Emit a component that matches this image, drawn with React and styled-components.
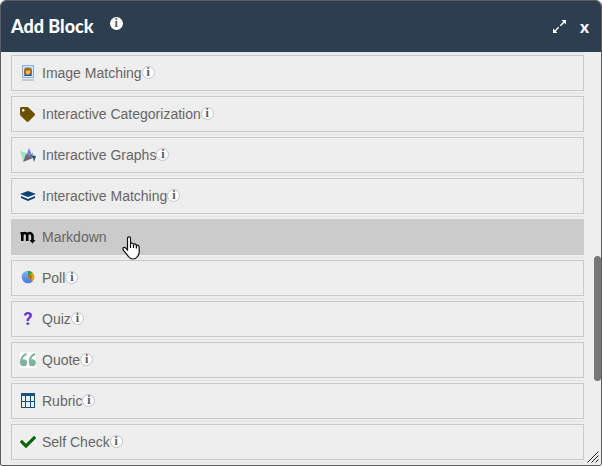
import React from 'react';
import styled, { createGlobalStyle } from 'styled-components';
import { FaTag, FaCheck } from 'react-icons/fa';

const GlobalStyle = createGlobalStyle`
  * {
    box-sizing: border-box;
  }
  body {
    margin: 0;
    background: #fff;
    font-family: 'Liberation Sans', Arial, sans-serif;
  }
`;

function ImageIcon() {
  return (
    <svg width='16' height='16' viewBox='0 0 16 16' aria-hidden='true'>
      <rect x='2.5' y='.5' width='11' height='12' fill='#d9e8fa' stroke='#88abe2' />
      <rect x='4' y='2' width='8' height='9' fill='#a9cdf4' />
      <path d='M4 9V6q0-3.500 4-3.500t4 3.500v3l-2 1z' fill='#a86a13' />
      <path d='M6 6l4-1v3l-2 2-2-1z' fill='#f5b75c' />
      <path d='M4 11q0-2 2-2l2 1 2-1q2 0 2 2z' fill='#245b9e' />
      <path d='M2 14h12v2H2z' fill='#c8c8c8' />
    </svg>
  );
}

function GraphsIcon() {
  return (
    <svg width='16' height='16' viewBox='0 0 16 16' aria-hidden='true'>
      <path d='M0 4l7 2-4 8z' fill='#98e8bd' />
      <path d='M9 1l4 9-7-1z' fill='#7b83dc' />
      <path d='M6 7l7 4-10 4z' fill='#71657e' />
      <path d='M10 8l6 1-2 6-1-4z' fill='#245468' />
      <path d='M12 5l2 4h-2z' fill='#7aa5c6' />
    </svg>
  );
}

function LayersIcon() {
  return (
    <svg width='16' height='16' viewBox='0 0 16 16' aria-hidden='true'>
      <path d='M0 6L8 3l8 3-8 3z' fill='#0b4273' />
      <path d='M1 8v2L8 13l7-3V8L8 11z' fill='#0b4273' />
    </svg>
  );
}

function MarkdownIcon() {
  return (
    <svg width='16' height='16' viewBox='0 0 16 16' fill='none' stroke='#000' aria-hidden='true'>
      <path d='M.5 4.200H2.300V12M2.300 6Q3 4 4.800 4T7.200 6V12M7.200 6Q8 4 9.700 4T12.500 6.500V11' strokeWidth='2.600' />
      <path d='M9.500 11h6l-3 3.500z' fill='#000' stroke='none' />
    </svg>
  );
}

function PollIcon() {
  return (
    <svg width='16' height='16' viewBox='0 0 16 16' aria-hidden='true'>
      <defs>
        <linearGradient id='pollBlue' x1='0' y1='0' x2='0' y2='1'>
          <stop offset='0' stopColor='#83b4f4' />
          <stop offset='1' stopColor='#4379df' />
        </linearGradient>
      </defs>
      <circle cx='8' cy='7' r='6.300' fill='url(#pollBlue)' />
      <path d='M8 7V.7a6.300 6.300 0 0 1 4.200 1.600z' fill='#22a84a' />
      <path d='M8 7l4.200-4.700A6.300 6.300 0 0 1 12.500 11.400z' fill='#e6a211' />
      <path d='M8 7l3.500-3v6.500z' fill='#c3571c' />
    </svg>
  );
}

function QuoteIcon() {
  return (
    <svg width='16' height='16' viewBox='0 0 16 16' aria-hidden='true'>
      <path d='M0 0h16v16H0z' fill='#fff' />
      <g fill='#7fb39e'>
        <circle cx='3.600' cy='10.700' r='3.500' />
        <circle cx='12.300' cy='10.700' r='3.500' />
      </g>
      <path d='M1.200 10.500Q.8 4 6.500 2M9.900 10.500Q9.500 4 15.200 2' fill='none' stroke='#7fb39e' strokeWidth='2' />
    </svg>
  );
}

function RubricIcon() {
  return (
    <svg width='16' height='16' viewBox='0 0 16 16' aria-hidden='true'>
      <path d='M1 0h14v15H1z' fill='#14527d' />
      <path d='M2 3h3v5H2zM6 3h4v5H6zM11 3h3v5h-3zM2 9h3v5H2zM6 9h4v5H6zM11 9h3v5h-3z' fill='#eee' />
    </svg>
  );
}

function ExpandIcon() {
  return (
    <svg width='13' height='13' viewBox='0 0 13 13' fill='#fff' aria-hidden='true'>
      <path d='M8.500 0H13v4.500z M4.500 13H0V8.500z' />
      <path d='M7.300 5.700L11.500 1.500M5.700 7.300L1.500 11.500' stroke='#fff' strokeWidth='1.500' />
    </svg>
  );
}

function QuestionMark() {
  return <Question aria-hidden='true'>?</Question>;
}

const blocks = [
  { name: 'Image Matching', icon: <ImageIcon />, info: true },
  { name: 'Interactive Categorization', icon: <FaTag size={15} color='#6b5000' />, info: true },
  { name: 'Interactive Graphs', icon: <GraphsIcon />, info: true },
  { name: 'Interactive Matching', icon: <LayersIcon />, info: true },
  { name: 'Markdown', icon: <MarkdownIcon />, info: false },
  { name: 'Poll', icon: <PollIcon />, info: true },
  { name: 'Quiz', icon: <QuestionMark />, info: true },
  { name: 'Quote', icon: <QuoteIcon />, info: true },
  { name: 'Rubric', icon: <RubricIcon />, info: true },
  { name: 'Self Check', icon: <FaCheck size={16} color='#066606' />, info: true },
];

function HandCursor() {
  return (
    <Cursor viewBox='0 0 18 24' aria-hidden='true'>
      <path d='M5.500 14V2.500Q5.500.8 7 .8T8.500 2.500V8Q8.700 6.800 10 7t1.500 1.600Q11.800 7.600 13 7.900t1.400 1.600Q15 8.800 16 9.200t1.200 1.600V16Q17 19 15.500 20.500Q14 23 11 23T6.500 20.500L1.200 14Q.5 12.300 1.500 11.600T4 12.300z' />
      <path d='M8.500 8v4M11.500 8.500V12M14.400 9.500v3' />
    </Cursor>
  );
}

function App() {
  const [active, setActive] = React.useState('Markdown');
  return (
    <>
      <GlobalStyle />
      <Dialog role='dialog' aria-labelledby='dialog-title'>
        <Header>
          <Title id='dialog-title'>Add Block</Title>
          <InfoButton $header aria-label='About blocks'>
            i
          </InfoButton>
          <HeaderActions>
            <HeaderButton aria-label='Expand'>
              <ExpandIcon />
            </HeaderButton>
            <HeaderButton aria-label='Close'>x</HeaderButton>
          </HeaderActions>
        </Header>
        <BlockList>
          {blocks.map((block) => (
            <BlockItem key={block.name}>
              <BlockRow $active={block.name === active}>
                <BlockButton onClick={() => setActive(block.name)}>
                  <IconSlot>{block.icon}</IconSlot>
                  {block.name}
                </BlockButton>
                {block.info && (
                  <InfoButton aria-label={`About ${block.name}`}>i</InfoButton>
                )}
                {block.name === active && <HandCursor />}
              </BlockRow>
            </BlockItem>
          ))}
        </BlockList>
        <ScrollThumb />
        <ResizeGrip viewBox='0 0 12 12' aria-hidden='true'>
          <path d='M.5 11.500l11-11M4.500 11.500l7-7M8.500 11.500l3-3' />
        </ResizeGrip>
      </Dialog>
    </>
  );
}

const Dialog = styled.div`
  position: relative;
  min-height: 100vh;
  border: 1px solid #5c5c5c;
  border-radius: 6px 6px 2px 2px;
  background: #eee;
  overflow: hidden;
`;

const Header = styled.header`
  display: flex;
  align-items: center;
  height: 51px;
  padding: 0 12px 0 10px;
  background: #2d3e50;
  color: #fff;
`;

const Title = styled.h1`
  margin: 0 16px 2px 0;
  font: 900 18px/24px Lato, sans-serif;
`;

const HeaderActions = styled.div`
  display: flex;
  align-items: center;
  gap: 14px;
  margin-left: auto;
`;

const HeaderButton = styled.button`
  display: flex;
  padding: 0;
  border: 0;
  background: none;
  color: #fff;
  font: 900 17px/20px Lato, sans-serif;
  cursor: pointer;
`;

const BlockList = styled.ul`
  margin: 0 17px 0 10px;
  padding: 0;
  list-style: none;
  border-top: 1px solid #e2e2e2;
`;

const BlockItem = styled.li`
  padding: 2px 0;
  border-bottom: 1px solid #e2e2e2;
`;

const BlockRow = styled.div`
  position: relative;
  display: flex;
  align-items: center;
  height: 36px;
  padding: 0 8px;
  border: 1px solid ${(props) => (props.$active ? '#cbcbcb' : '#c9c9c9')};
  background: ${(props) => (props.$active ? '#cbcbcb' : '#eee')};
`;

const BlockButton = styled.button`
  display: flex;
  align-items: center;
  padding: 0;
  border: 0;
  background: none;
  color: #666;
  font: 14px/20px 'Liberation Sans', Arial, sans-serif;
  cursor: pointer;
`;

const IconSlot = styled.span`
  display: flex;
  align-items: center;
  width: 16px;
  height: 16px;
  margin-right: 6px;
`;

const InfoButton = styled.button`
  width: 13px;
  height: 13px;
  margin-bottom: ${(props) => (props.$header ? '6px' : '2px')};
  padding: 0;
  border: ${(props) => (props.$header ? '0' : '1px solid #c4c4c8')};
  border-radius: 50%;
  background: #fff;
  color: #556;
  font: bold 12px/11px 'Liberation Serif', serif;
  text-align: center;
  cursor: pointer;
`;

const Question = styled.span`
  width: 16px;
  color: #6633cc;
  font: bold 18px/18px Roboto, sans-serif;
  text-align: center;
`;

const Cursor = styled.svg`
  position: absolute;
  top: 16px;
  left: 110px;
  width: 18px;
  height: 24px;
  fill: #fff;
  stroke: #111;
  stroke-width: 1.2;
  z-index: 1;
  pointer-events: none;
`;

const ScrollThumb = styled.div`
  position: absolute;
  top: 55%;
  right: 0;
  width: 7px;
  height: 27%;
  border-radius: 4px;
  background: #777;
`;

const ResizeGrip = styled.svg`
  position: absolute;
  right: 2px;
  bottom: 2px;
  width: 12px;
  height: 12px;
  fill: none;
  stroke: #222;
`;

export default App;
